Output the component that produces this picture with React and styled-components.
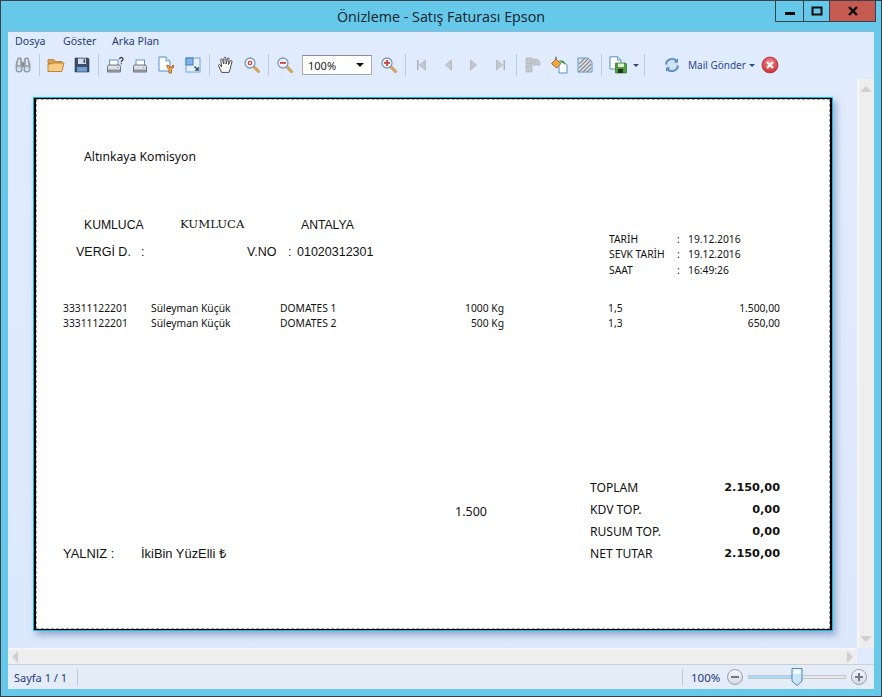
import React from "react"
import styled, { createGlobalStyle } from "styled-components"

const GlobalStyle = createGlobalStyle`
  html, body {
    margin: 0;
    padding: 0;
    background: #66c9ea;
  }
`

const uiFont = `"Noto Sans", "DejaVu Sans", sans-serif`

const Window = styled.div`
  box-sizing: border-box;
  width: 882px;
  height: 697px;
  border: 1px solid #3a4149;
  background: #66c9ea;
  display: flex;
  flex-direction: column;
  position: relative;
  overflow: hidden;
  font-family: ${uiFont};
`

const TitleBar = styled.div`
  height: 30px;
  display: flex;
  align-items: center;
  justify-content: center;
  font-family: "Open Sans", sans-serif;
  font-size: 14.3px;
  color: #10222c;
  padding-top: 1px;
  box-sizing: border-box;
`

const WindowControls = styled.div`
  position: absolute;
  top: -1px;
  right: 5px;
  display: flex;
  height: 22px;
  border: 1px solid #3a4149;
  border-top: 0;
  box-sizing: border-box;
`

const ControlButton = styled.div`
  width: ${({ $w }) => $w}px;
  display: flex;
  align-items: center;
  justify-content: center;
  background: ${({ $close }) => ($close ? "#c55a50" : "transparent")};
  border-left: ${({ $first }) => ($first ? "0" : "1px solid #3a4149")};
`

const Client = styled.div`
  flex: 1;
  margin: 0 7px 7px;
  display: flex;
  flex-direction: column;
  background: #e0ebfd;
  border-top: 1px solid #8fb9d3;
  min-height: 0;
`

const MenuBar = styled.div`
  height: 18px;
  display: flex;
  align-items: center;
  padding-left: 7px;
  color: #263c78;
  font-size: 10.6px;
`

const MenuItem = styled.span`
  width: ${({ $w }) => $w}px;
`

const Toolbar = styled.div`
  height: 30px;
  display: flex;
  align-items: center;
  padding-left: 2px;
  flex-shrink: 0;
`

const ToolButton = styled.div`
  width: ${({ $w }) => $w || 26}px;
  height: 24px;
  display: flex;
  align-items: center;
  justify-content: center;
  flex-shrink: 0;
`

const ToolSeparator = styled.div`
  width: 1px;
  height: 22px;
  margin: 0 ${({ $right }) => $right || 3}px 0 ${({ $left }) => $left || 3}px;
  background: #bfcbdb;
  flex-shrink: 0;
`

const ZoomCombo = styled.div`
  box-sizing: border-box;
  width: 70px;
  height: 20px;
  margin: 0 4px;
  border: 1px solid #a9a9a9;
  border-top-color: #8a8a8a;
  background: #fff;
  display: flex;
  align-items: center;
  justify-content: space-between;
  padding: 0 7px 0 5px;
  font-size: 11px;
  color: #1a1a1a;
`

const MailLabel = styled.span`
  font-size: 10px;
  color: #2b4a8c;
  margin-left: 7px;
  width: 61px;
  white-space: nowrap;
  flex-shrink: 0;
`

const DropCaret = styled.span`
  width: 0;
  height: 0;
  border-left: ${({ $size }) => $size}px solid transparent;
  border-right: ${({ $size }) => $size}px solid transparent;
  border-top: ${({ $size }) => $size}px solid ${({ $color }) => $color};
  flex-shrink: 0;
`

const Body = styled.div`
  flex: 1;
  display: flex;
  min-height: 0;
`

const Viewport = styled.div`
  flex: 1;
  padding: 17px 0 0 25px;
  background: linear-gradient(#e0ebfd, #dce8fb);
`

const Page = styled.div`
  box-sizing: border-box;
  width: 800px;
  height: 534px;
  border: 1px solid #19b4dc;
  box-shadow: 3px 4px 7px rgba(90, 115, 165, 0.55);
  display: flex;
`

const PageEdge = styled.div`
  flex: 1;
  display: flex;
  border: 1px solid #000;
  border-left-width: 2px;
  border-right-width: 2px;
  background: #fff;
`

const PageMargin = styled.div`
  flex: 1;
  border: 1px dashed #a5a5a5;
  display: flex;
  flex-direction: column;
  color: #111;
  font-family: "Noto Sans", sans-serif;
`

const Company = styled.div`
  margin-top: 49px;
  padding-left: 47px;
  height: 16px;
  line-height: 16px;
  font-size: 12.2px;
`

const Header = styled.div`
  margin-top: 52px;
  display: flex;
  height: 61px;
`

const Party = styled.div`
  width: 572px;
  display: flex;
  flex-direction: column;
  gap: 11px;
`

const PartyRow = styled.div`
  display: grid;
  grid-template-columns: ${({ $cols }) => $cols};
  padding-left: ${({ $left }) => $left}px;
  height: 16px;
  line-height: 16px;
  font-family: "Liberation Sans", sans-serif;
  font-size: ${({ $size }) => $size}px;
`

const SerifCell = styled.span`
  font-family: "DejaVu Serif", serif;
  font-size: 11.7px;
  margin-top: -1px;
`

const DateTable = styled.div`
  margin-top: 14.5px;
  font-size: 10.3px;
`

const DateRow = styled.div`
  display: grid;
  grid-template-columns: 68px 11px auto;
  height: 15.5px;
  line-height: 15.5px;
`

const Lines = styled.div`
  margin-top: 23px;
  padding-left: 26px;
  font-size: 10.3px;
`

const LineRow = styled.div`
  display: grid;
  grid-template-columns: 88px 129px 122px 102px 164px 112px;
  height: 15px;
  line-height: 15px;
`

const RightCell = styled.span`
  text-align: right;
`

const PriceCell = styled.span`
  padding-left: 104px;
`

const Footer = styled.div`
  margin-top: 146px;
  padding-left: 26px;
  font-family: "Liberation Sans", sans-serif;
  font-size: 12.9px;
`

const FooterRow = styled.div`
  display: grid;
  grid-template-columns: 78px 314px 135px 88px 102px;
  height: 22px;
  line-height: 22px;
`

const NoteCell = styled.span`
  font-family: "Noto Sans", sans-serif;
  font-size: 12.5px;
  margin-top: 2px;
`

const TotalLabel = styled.span`
  font-family: "Noto Sans", sans-serif;
  font-size: 12.1px;
  white-space: nowrap;
`

const TotalValue = styled.span`
  text-align: right;
  font-family: "DejaVu Sans", sans-serif;
  font-weight: 700;
  font-size: 11.3px;
`

const VScroll = styled.div`
  box-sizing: border-box;
  width: 17px;
  margin-top: -1px;
  background: #eeeeee;
  border-left: 2px solid #f6f6f6;
  display: flex;
  flex-direction: column;
  align-items: center;
  justify-content: space-between;
  padding: 7px 2px 6px 0;
`

const HScrollRow = styled.div`
  height: 16px;
  display: flex;
`

const HScroll = styled.div`
  flex: 1;
  box-sizing: border-box;
  background: #eeeeee;
  border-top: 2px solid #f5f5f5;
  display: flex;
  align-items: center;
  justify-content: space-between;
  padding: 0 4px;
`

const ScrollCorner = styled.div`
  width: 17px;
`

const ScrollArrow = styled.span`
  width: 0;
  height: 0;
  ${({ $dir }) =>
    $dir === "up" || $dir === "down"
      ? `border-left: 6px solid transparent;
         border-right: 6px solid transparent;
         border-${$dir === "up" ? "bottom" : "top"}: 6px solid #cfcfcf;`
      : `border-top: 6px solid transparent;
         border-bottom: 6px solid transparent;
         border-${$dir === "left" ? "right" : "left"}: 6px solid #cfcfcf;`}
`

const StatusBar = styled.div`
  box-sizing: border-box;
  height: 25px;
  display: flex;
  align-items: center;
  background: #e4ecf8;
  border-top: 1px solid #c7d0dd;
  color: #24387c;
  font-size: 11px;
  padding-left: 6px;
`

const PageInfo = styled.span`
  width: 63px;
`

const StatusSeparator = styled.div`
  width: 1px;
  height: 17px;
  background: #bccadc;
`

const StatusSpacer = styled.div`
  flex: 1;
`

const ZoomValue = styled.span`
  width: 36px;
  padding-left: 8px;
  font-size: 11.5px;
`

const RoundButton = styled.div`
  box-sizing: border-box;
  width: 16px;
  height: 16px;
  border-radius: 50%;
  border: 1px solid #9aa0b2;
  background: linear-gradient(#f5f6fa, #d6d9e4);
  display: flex;
  align-items: center;
  justify-content: center;
  margin: ${({ $margin }) => $margin};
`

const SliderTrack = styled.div`
  box-sizing: border-box;
  width: 98px;
  height: 4px;
  background: #e6e8ea;
  border: 1px solid #c3c6c9;
  position: relative;
`

const SliderFill = styled.div`
  height: 2px;
  background: #a5dcf7;
`

const SliderThumb = styled.svg`
  position: absolute;
  left: 42px;
  top: -9px;
`

function Binoculars() {
  return (
    <svg width="18" height="18" viewBox="0 0 18 18">
      <path d="M4 2h3l1 5v7.5a2 2 0 0 1-2 1.5H4a2.2 2.2 0 0 1-2-2V8z" fill="#a4abb4" stroke="#7b818b" strokeWidth=".7" />
      <path d="M11 2h3l2 6v6a2.2 2.2 0 0 1-2 2h-2a2 2 0 0 1-2-1.5V7z" fill="#a4abb4" stroke="#7b818b" strokeWidth=".7" />
      <path d="M4.6 3h1.2v6H3.6z M12 3h1.2l1 6H12z" fill="#e6e8eb" />
      <rect x="8" y="6" width="2" height="5" fill="#8a909a" />
      <ellipse cx="5" cy="13" rx="2.2" ry="2.3" fill="#bfe2f5" />
      <ellipse cx="13" cy="13" rx="2.2" ry="2.3" fill="#bfe2f5" />
    </svg>
  )
}

function Folder() {
  return (
    <svg width="18" height="18" viewBox="0 0 18 18">
      <path d="M1 3.5h6l1.5 2H15v2H1z" fill="#dd9f4e" stroke="#b87a2e" strokeWidth=".8" />
      <path d="M1 15.5V8h3l1-1h12l-2.2 8.5z" fill="#f8cd82" stroke="#b87a2e" strokeWidth=".9" />
    </svg>
  )
}

function Floppy() {
  return (
    <svg width="18" height="18" viewBox="0 0 18 18">
      <path d="M2 2h13l1 1v13H2z" fill="#3c4d6b" stroke="#2e3b55" strokeWidth=".6" />
      <rect x="5" y="2.5" width="8" height="5.5" fill="#d9dfe9" />
      <rect x="10.5" y="3.3" width="1.6" height="3.6" fill="#3c4d6b" />
      <rect x="4" y="11" width="10" height="4.6" fill="#6f9fd0" />
    </svg>
  )
}

function Printer({ help }) {
  return (
    <svg width="18" height="18" viewBox="0 0 18 18">
      <rect x={help ? 3.5 : 4} y="4" width="8.5" height="6" fill="#fff" stroke="#5b94cc" />
      <path d="M1.5 10.5a1.5 1.5 0 0 1 1.5-1.5h10a1.5 1.5 0 0 1 1.5 1.5V16h-13z" fill="#dfe1e4" stroke="#5f656d" strokeWidth=".9" />
      <rect x="1.7" y="13.5" width="12.6" height="2.4" fill="#8b9098" />
      <rect x="11" y="11" width="1.5" height="1" fill="#55b06a" />
      {help && (
        <path d="M13.6 3.2a1.7 1.7 0 1 1 2.6 1.4c-.7.5-.9.8-.9 1.6 M15.3 7.2v1" fill="none" stroke="#333" strokeWidth="1.2" />
      )}
    </svg>
  )
}

function PageSetup() {
  return (
    <svg width="18" height="18" viewBox="0 0 18 18">
      <path d="M1 1h7l4 4v10H1z" fill="#fff" stroke="#4f8fd0" />
      <path d="M8 1v4h4" fill="#d6e6f8" stroke="#4f8fd0" strokeWidth=".8" />
      <path d="M9 9v2.5l2 1.6V17h2.5v-3.9l2-1.6V9l-1.4 1v1.4h-2.7V10z" fill="#f1bb3c" stroke="#b8511c" strokeWidth=".9" />
    </svg>
  )
}

function ScaleIcon() {
  return (
    <svg width="18" height="18" viewBox="0 0 18 18">
      <rect x="2" y="2" width="14" height="14" fill="#e5effa" stroke="#6fa6d8" />
      <rect x="2" y="2" width="7" height="7" fill="#7fb4e4" stroke="#3f7fc0" />
      <path d="M10.5 10.5l3.5 3.5 M14.2 11v3.2H11" fill="none" stroke="#2c3e55" strokeWidth="1.1" />
    </svg>
  )
}

function HandIcon() {
  return (
    <svg width="18" height="18" viewBox="0 0 18 18">
      <path
        d="M4.6 16.4 1.6 9.8c-.5-1.2 1-1.8 1.7-.8l1.4 2L3.8 3.9c-.1-1.2 1.5-1.4 1.8-.2L6.8 8 7 2.2c0-1.3 1.8-1.3 1.9 0L9.2 8l1.2-5.2c.3-1.2 1.9-.9 1.7.3L11.4 8.6l2-3.6c.6-1 2-.4 1.6.7L13.6 11c-.3 2-.8 3.3-1.6 5.4z"
        fill="#fff"
        stroke="#4a4a4a"
        strokeWidth="1"
        strokeLinejoin="round"
      />
    </svg>
  )
}

function Magnifier({ mark }) {
  return (
    <svg width="18" height="18" viewBox="0 0 18 18">
      <path d="M10.5 10.5l5 5" stroke="#b9772a" strokeWidth="2.6" strokeLinecap="round" />
      <path d="M10.5 10.5l5 5" stroke="#efbe62" strokeWidth="1.2" strokeLinecap="round" />
      <circle cx="7" cy="7" r="5" fill="#eef4fb" stroke="#8299b5" strokeWidth="1.3" />
      {mark === "dot" && <circle cx="7" cy="7" r="1.7" fill="none" stroke="#c8453c" strokeWidth="1.2" />}
      {mark !== "dot" && <rect x="4" y="6" width="6" height="1.8" fill="#c8453c" />}
      {mark === "plus" && <rect x="6.1" y="4" width="1.8" height="6" fill="#c8453c" />}
    </svg>
  )
}

function NavIcon({ dir, bar }) {
  const left = dir === "left"
  return (
    <svg width="18" height="18" viewBox="0 0 18 18">
      {bar && <rect x={left ? 4 : 12.5} y="4" width="1.5" height="10" fill="#aeb2b8" />}
      <path
        d={left ? "M12.5 4v10L6.5 9z" : "M5.5 4v10l6-5z"}
        fill="#c5c8cc"
        stroke="#aeb2b8"
        strokeWidth=".8"
      />
    </svg>
  )
}

function MultiPage() {
  return (
    <svg width="18" height="18" viewBox="0 0 18 18">
      <path d="M2 2h6v6H2z M9 3h4l3 3v3H9z M2 9h6v7H2z" fill="#c3c6ca" stroke="#a9acb1" strokeWidth=".6" />
    </svg>
  )
}

function PageColor() {
  return (
    <svg width="18" height="18" viewBox="0 0 18 18">
      <path d="M9 6h5l3 3v8H9z" fill="#fff" stroke="#4f8fd0" />
      <path d="M1.5 7.5 6 3l5 4.5-4.5 4.5z" fill="#f3a93a" stroke="#7a5320" strokeWidth=".8" />
      <path d="M6 3V.8" stroke="#333" strokeWidth="1" />
      <path d="M9 4l5 1 1 4-3-2.5z" fill="#3f9b47" />
    </svg>
  )
}

function Watermark() {
  return (
    <svg width="18" height="18" viewBox="0 0 18 18">
      <path d="M2 2h10l4 4v10H2z" fill="#dfe3e8" stroke="#5f93c8" />
      <path d="M3 8l6-6 M3 12l9-9 M3 16l12-12 M7 16l8-8 M11 16l4-4" stroke="#8d9197" strokeWidth="1.3" />
    </svg>
  )
}

function ExportIcon() {
  return (
    <svg width="20" height="18" viewBox="0 0 20 18">
      <path d="M1 .8h7.5L12 4v9H1z" fill="#fff" stroke="#4f8fd0" />
      <path d="M8.5 1v3.2H12" fill="#d6e6f8" stroke="#4f8fd0" strokeWidth=".8" />
      <path d="M6.5 7h10l1 1v9h-11z" fill="#4e9e3f" stroke="#2f6e26" strokeWidth=".7" />
      <rect x="9" y="7.5" width="6" height="3.5" fill="#dff0d2" />
      <rect x="9" y="13" width="5" height="4" fill="#22331f" />
    </svg>
  )
}

function RefreshIcon() {
  return (
    <svg width="18" height="18" viewBox="0 0 20 20">
      <circle cx="10" cy="10" r="5.4" fill="#d3e4f6" stroke="#9dbfe2" strokeWidth=".8" />
      <path d="M3.2 9.5A6.9 6.9 0 0 1 15 5.2" fill="none" stroke="#4f86bf" strokeWidth="1.9" />
      <path d="M16.8 10.5A6.9 6.9 0 0 1 5 14.8" fill="none" stroke="#4f86bf" strokeWidth="1.9" />
      <path d="M16.6 2.6v4.6H12z M3.4 17.4v-4.6H8z" fill="#4f86bf" />
    </svg>
  )
}

function CloseIcon() {
  return (
    <svg width="18" height="18" viewBox="0 0 18 18">
      <defs>
        <radialGradient id="closeFill" cx="50%" cy="35%" r="70%">
          <stop offset="0" stopColor="#f58a8a" />
          <stop offset="1" stopColor="#c9262c" />
        </radialGradient>
      </defs>
      <circle cx="9" cy="9" r="8" fill="url(#closeFill)" stroke="#a8353a" strokeWidth=".8" />
      <path d="M6 6l6 6 M12 6l-6 6" stroke="#fff" strokeWidth="2.3" />
    </svg>
  )
}

const lines = [
  { code: "33311122201", name: "Süleyman Küçük", product: "DOMATES 1", qty: "1000 Kg", price: "1,5", total: "1.500,00" },
  { code: "33311122201", name: "Süleyman Küçük", product: "DOMATES 2", qty: "500 Kg", price: "1,3", total: "650,00" },
]

export default function App() {
  return (
    <>
      <GlobalStyle />
      <Window>
        <TitleBar>Önizleme - Satış Faturası Epson</TitleBar>
        <WindowControls>
          <ControlButton $w={27} $first>
            <svg width="12" height="12" viewBox="0 0 12 12"><rect x="1" y="7" width="10" height="3" fill="#0c0c0c" /></svg>
          </ControlButton>
          <ControlButton $w={25}>
            <svg width="12" height="12" viewBox="0 0 12 12"><path d="M1.5 2.5h9v7h-9z" fill="none" stroke="#0c0c0c" strokeWidth="2" /></svg>
          </ControlButton>
          <ControlButton $w={45} $close>
            <svg width="12" height="12" viewBox="0 0 12 12"><path d="M2 2l8 8 M10 2l-8 8" stroke="#0c0c0c" strokeWidth="2.4" /></svg>
          </ControlButton>
        </WindowControls>

        <Client>
          <MenuBar>
            <MenuItem $w={48}>Dosya</MenuItem>
            <MenuItem $w={49}>Göster</MenuItem>
            <MenuItem>Arka Plan</MenuItem>
          </MenuBar>

          <Toolbar>
            <ToolButton><Binoculars /></ToolButton>
            <ToolSeparator />
            <ToolButton><Folder /></ToolButton>
            <ToolButton><Floppy /></ToolButton>
            <ToolSeparator />
            <ToolButton><Printer help /></ToolButton>
            <ToolButton><Printer /></ToolButton>
            <ToolButton><PageSetup /></ToolButton>
            <ToolButton><ScaleIcon /></ToolButton>
            <ToolSeparator />
            <ToolButton><HandIcon /></ToolButton>
            <ToolButton><Magnifier mark="dot" /></ToolButton>
            <ToolSeparator />
            <ToolButton><Magnifier mark="minus" /></ToolButton>
            <ZoomCombo>
              100%
              <DropCaret $size={4} $color="#111" />
            </ZoomCombo>
            <ToolButton><Magnifier mark="plus" /></ToolButton>
            <ToolSeparator />
            <ToolButton><NavIcon dir="left" bar /></ToolButton>
            <ToolButton><NavIcon dir="left" /></ToolButton>
            <ToolButton><NavIcon dir="right" /></ToolButton>
            <ToolButton><NavIcon dir="right" bar /></ToolButton>
            <ToolSeparator />
            <ToolButton><MultiPage /></ToolButton>
            <ToolButton><PageColor /></ToolButton>
            <ToolButton><Watermark /></ToolButton>
            <ToolSeparator />
            <ToolButton $w={28}><ExportIcon /></ToolButton>
            <DropCaret $size={3} $color="#3b4a66" />
            <ToolSeparator $left={5} $right={18} />
            <ToolButton $w={18}><RefreshIcon /></ToolButton>
            <MailLabel>Mail Gönder</MailLabel>
            <DropCaret $size={3} $color="#2b4a8c" />
            <ToolButton $w={30}><CloseIcon /></ToolButton>
          </Toolbar>

          <Body>
            <Viewport>
              <Page>
                <PageEdge>
                  <PageMargin>
                    <Company>Altınkaya Komisyon</Company>

                    <Header>
                      <Party>
                        <PartyRow $left={47} $size={12.2} $cols="96px 121px auto">
                          <span>KUMLUCA</span>
                          <SerifCell>KUMLUCA</SerifCell>
                          <span>ANTALYA</span>
                        </PartyRow>
                        <PartyRow $left={39} $size={12.5} $cols="65px 106px 41px 9px auto">
                          <span>VERGİ D.</span>
                          <span>:</span>
                          <span>V.NO</span>
                          <span>:</span>
                          <span>01020312301</span>
                        </PartyRow>
                      </Party>
                      <DateTable>
                        <DateRow><span>TARİH</span><span>:</span><span>19.12.2016</span></DateRow>
                        <DateRow><span>SEVK TARİH</span><span>:</span><span>19.12.2016</span></DateRow>
                        <DateRow><span>SAAT</span><span>:</span><span>16:49:26</span></DateRow>
                      </DateTable>
                    </Header>

                    <Lines>
                      {lines.map((line) => (
                        <LineRow key={line.product}>
                          <span>{line.code}</span>
                          <span>{line.name}</span>
                          <span>{line.product}</span>
                          <RightCell>{line.qty}</RightCell>
                          <PriceCell>{line.price}</PriceCell>
                          <RightCell>{line.total}</RightCell>
                        </LineRow>
                      ))}
                    </Lines>

                    <Footer>
                      <FooterRow>
                        <span /><span /><span />
                        <TotalLabel>TOPLAM</TotalLabel>
                        <TotalValue>2.150,00</TotalValue>
                      </FooterRow>
                      <FooterRow>
                        <span /><span />
                        <NoteCell>1.500</NoteCell>
                        <TotalLabel>KDV TOP.</TotalLabel>
                        <TotalValue>0,00</TotalValue>
                      </FooterRow>
                      <FooterRow>
                        <span /><span /><span />
                        <TotalLabel>RUSUM TOP.</TotalLabel>
                        <TotalValue>0,00</TotalValue>
                      </FooterRow>
                      <FooterRow>
                        <span>YALNIZ :</span>
                        <span>İkiBin YüzElli ₺</span>
                        <span />
                        <TotalLabel>NET TUTAR</TotalLabel>
                        <TotalValue>2.150,00</TotalValue>
                      </FooterRow>
                    </Footer>
                  </PageMargin>
                </PageEdge>
              </Page>
            </Viewport>
            <VScroll>
              <ScrollArrow $dir="up" />
              <ScrollArrow $dir="down" />
            </VScroll>
          </Body>

          <HScrollRow>
            <HScroll>
              <ScrollArrow $dir="left" />
              <ScrollArrow $dir="right" />
            </HScroll>
            <ScrollCorner />
          </HScrollRow>

          <StatusBar>
            <PageInfo>Sayfa 1 / 1</PageInfo>
            <StatusSeparator />
            <StatusSpacer />
            <StatusSeparator />
            <ZoomValue>100%</ZoomValue>
            <RoundButton $margin="0 5px 0 0">
              <svg width="10" height="10" viewBox="0 0 10 10"><rect x="1" y="4" width="8" height="2" fill="#6f7690" /></svg>
            </RoundButton>
            <SliderTrack>
              <SliderFill style={{ width: 47 }} />
              <SliderThumb width="12" height="20" viewBox="0 0 12 20">
                <path d="M1 1.5h10V14l-5 4.5L1 14z" fill="#c8e6fa" stroke="#4f86bf" />
                <rect x="2" y="2" width="8" height="5" fill="#f2f9fe" />
              </SliderThumb>
            </SliderTrack>
            <RoundButton $margin="0 7px 0 5px">
              <svg width="10" height="10" viewBox="0 0 10 10"><path d="M1 4h3V1h2v3h3v2H6v3H4V6H1z" fill="#6f7690" /></svg>
            </RoundButton>
          </StatusBar>
        </Client>
      </Window>
    </>
  )
}
